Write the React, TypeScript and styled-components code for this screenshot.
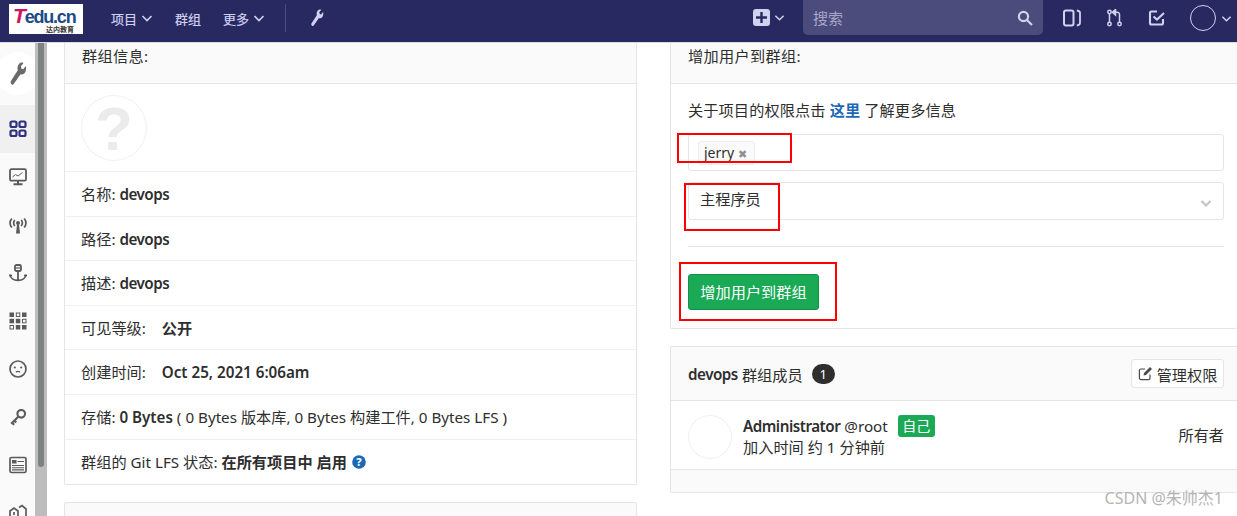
import React from 'react';
import styled, { createGlobalStyle } from 'styled-components';

const GlobalStyle = createGlobalStyle`
  html, body {
    margin: 0;
    padding: 0;
    height: 516px;
    overflow: hidden;
    background: #fff;
    font-family: "Noto Sans", "Noto Sans CJK SC", sans-serif;
    font-size: 15.2px;
    color: #2e2e2e;
  }
  * { box-sizing: border-box; }
`;

const Chevron = ({ size = 12, color = '#d1d1f0', weight = 1.6 }: { size?: number; color?: string; weight?: number }) => (
  <svg width={size} height={size} viewBox="0 0 12 12" fill="none" stroke={color} strokeWidth={weight}>
    <path d="M1.5 4l4.5 4.5L10.5 4" />
  </svg>
);

const WrenchIcon = ({ width, height, color }: { width: number; height: number; color: string }) => (
  <svg width={width} height={height} viewBox="0 0 16 16" fill={color} preserveAspectRatio="none">
    <path d="M14.900 2.600 12.600 4.900l-1.500-.4-.5-1.600L12.900.7c-1.400-.6-3.100-.3-4.200.8-1.100 1.100-1.400 2.600-.9 4L2 12.400c-.7.700-.7 1.700 0 2.300.7.600 1.600.600 2.200 0l6.100-6.600c1.300.4 2.800.1 3.800-.9 1.100-1.200 1.400-3.100.8-4.600z" />
  </svg>
);

const navIcon = '#d1d1f0';
const sideIcon = '#5a5a5a';
const sideActive = '#30307f';

const sideIcons: React.ReactNode[] = [
  <svg key="overview" width="18" height="18" viewBox="0 0 18 18" fill="none" stroke={sideActive} strokeWidth="2.200">
    <rect x="1.500" y="1.500" width="6" height="5.500" rx="1.500" />
    <rect x="10.500" y="1.500" width="6" height="5.500" rx="1.500" />
    <rect x="1.500" y="10.500" width="6" height="5.500" rx="1.500" />
    <rect x="10.500" y="10.500" width="6" height="5.500" rx="1.500" />
  </svg>,
  <svg key="monitor" width="18" height="18" viewBox="0 0 18 18" fill="none" stroke={sideIcon} strokeWidth="1.800">
    <rect x="1" y="1.200" width="16" height="11.500" rx="1.500" />
    <path d="M3.500 9l3-2.500 2.500 1.500 4.500-3.500" strokeWidth="1" />
    <path d="M9 13v2.500M4.500 16.200h9" strokeWidth="2" />
  </svg>,
  <svg key="antenna" width="18" height="18" viewBox="0 0 18 18" fill="none" stroke={sideIcon} strokeWidth="1.700">
    <circle cx="9" cy="7" r="2" fill={sideIcon} stroke="none" />
    <path d="M8 8.500h2l1 9H7z" fill={sideIcon} stroke="none" />
    <path d="M5.800 4c-1.400 1.800-1.400 4.200 0 6M12.200 4c1.400 1.800 1.400 4.200 0 6M2.800 2.500c-2.200 2.800-2.200 6.200 0 9M15.200 2.500c2.200 2.800 2.200 6.200 0 9" />
  </svg>,
  <svg key="anchor" width="18" height="18" viewBox="0 0 18 18" fill="none" stroke={sideIcon} strokeWidth="1.800">
    <rect x="6" y="1" width="6" height="6" rx="1.500" />
    <path d="M9 7v10M1.200 10.500c0 3.800 3.500 5.900 7.800 5.900s7.800-2.100 7.800-5.900" />
    <path d="M7 4h4" strokeWidth="1.200" />
    <path d="M0 11.500h3M15 11.500h3" strokeWidth="1.400" />
  </svg>,
  <svg key="grid" width="18" height="18" viewBox="0 0 18 18" fill={sideIcon}>
    <rect x="0.500" y="0.500" width="4.500" height="4.500" />
    <rect x="7.300" y="1" width="3.500" height="3.500" fill="none" stroke={sideIcon} />
    <rect x="13" y="0.500" width="4.500" height="4.500" />
    <rect x="0.500" y="6.800" width="4.500" height="4.500" />
    <rect x="6.800" y="6.800" width="4.500" height="4.500" />
    <rect x="13.500" y="7.300" width="3.500" height="3.500" fill="none" stroke={sideIcon} />
    <rect x="1" y="13.500" width="3.500" height="3.500" fill="none" stroke={sideIcon} />
    <rect x="6.800" y="13" width="4.500" height="4.500" />
    <rect x="13" y="13" width="4.500" height="4.500" />
  </svg>,
  <svg key="face" width="18" height="18" viewBox="0 0 18 18" fill="none" stroke={sideIcon} strokeWidth="1.700">
    <circle cx="9" cy="9" r="8" />
    <circle cx="5.800" cy="7.500" r="1.100" fill={sideIcon} stroke="none" />
    <circle cx="12.200" cy="7.500" r="1.100" fill={sideIcon} stroke="none" />
    <path d="M6.800 12.200c1.300-1 3.100-1 4.400 0" strokeWidth="1.300" />
  </svg>,
  <svg key="key" width="18" height="18" viewBox="0 0 18 18" fill="none" stroke={sideIcon} strokeWidth="2.100">
    <circle cx="12.200" cy="5.800" r="3.800" />
    <path d="M9.500 8.500 2.200 15.800M3 14.800l2.200 2M5.300 12.600l2 1.800" />
  </svg>,
  <svg key="news" width="18" height="18" viewBox="0 0 18 18" fill="none" stroke={sideIcon} strokeWidth="1.700">
    <rect x="1" y="1.500" width="16" height="15" rx="1.500" />
    <rect x="3" y="4" width="4.500" height="3.500" fill={sideIcon} stroke="none" />
    <path d="M8.500 5.500H15M3 9.500h12M3 11.700h12M3 13.900h12" strokeWidth="1.100" />
  </svg>,
  <svg key="house" width="18" height="18" viewBox="0 0 18 18" fill="none" stroke={sideIcon} strokeWidth="1.700">
    <path d="M1 7l4-3 4 3v10H1zM10 3.500l3-2 4 3.500v12h-5" />
    <path d="M5 8v3" />
  </svg>,
];

export default function App() {
  const rows: React.ReactNode[] = [
    <>名称: <Name>devops</Name></>,
    <>路径: <Name>devops</Name></>,
    <>描述: <Name>devops</Name></>,
    <>可见等级: <GapSpan /><b>公开</b></>,
    <>创建时间: <GapSpan /><b>Oct 25, 2021 6:06am</b></>,
    <>存储: <b>0 Bytes</b> ( 0 Bytes 版本库, 0 Bytes 构建工件, 0 Bytes LFS )</>,
    <>
      群组的 Git LFS 状态: <b>在所有项目中 启用</b>{' '}
      <HelpIcon viewBox="0 0 14 14">
        <circle cx="7" cy="7" r="6.800" fill="#1b69b6" />
        <text x="7" y="10.800" textAnchor="middle" fontSize="11" fontWeight="800" fill="#fff">?</text>
      </HelpIcon>
    </>,
  ];

  return (
    <>
      <GlobalStyle />
      <Navbar>
        <Logo>
          <LogoMark><LogoT>T</LogoT>edu.cn</LogoMark>
          <LogoSub>达内教育</LogoSub>
        </Logo>
        <NavLinks>
          <NavLink>项目 <Chevron /></NavLink>
          <NavLink>群组</NavLink>
          <NavLink>更多 <Chevron /></NavLink>
        </NavLinks>
        <NavDivider />
        <NavWrench><WrenchIcon width={14} height={18} color={navIcon} /></NavWrench>
        <NavRight>
          <PlusGroup>
            <PlusBox>
              <svg width="11" height="11" viewBox="0 0 11 11" fill="none" stroke="#292961" strokeWidth="2.400">
                <path d="M5.500 0v11M0 5.500h11" />
              </svg>
            </PlusBox>
            <Chevron size={11} />
          </PlusGroup>
          <SearchBox>
            <span>搜索</span>
            <svg width="16" height="16" viewBox="0 0 16 16" fill="none" stroke="#d1d1f0" strokeWidth="2.200">
              <circle cx="6.500" cy="6.500" r="4.600" />
              <path d="M10 10l5 5" />
            </svg>
          </SearchBox>
          <NavIcons>
            <svg width="18" height="18" viewBox="0 0 18 18" fill="none" stroke={navIcon} strokeWidth="2">
              <rect x="1" y="1.500" width="9.500" height="15" rx="2" />
              <path d="M13.800 1.500c2.400.3 3.200 1.200 3.200 2.500v10c0 1.300-.8 2.200-3.200 2.500" strokeWidth="1.800" />
            </svg>
            <svg width="15" height="18" viewBox="0 0 15 18" fill="none" stroke={navIcon} strokeWidth="1.500">
              <circle cx="2.500" cy="3" r="1.700" />
              <circle cx="2.500" cy="15" r="1.700" />
              <circle cx="12.500" cy="15" r="1.700" />
              <path d="M2.500 5v8M12.500 13V5.500c0-1.200-.8-2.200-2.200-2.200H8" />
              <path d="M8.500 .5v5.600L5.400 3.300z" fill={navIcon} />
            </svg>
            <svg width="18" height="18" viewBox="0 0 18 18" fill="none" stroke={navIcon} strokeWidth="2.100">
              <path d="M9 2.500H3.500C2.500 2.500 2 3 2 4v10c0 1 .5 1.500 1.500 1.500h10c1 0 1.500-.5 1.500-1.500v-4" />
              <path d="M5.500 7.500 9 10.500l7-6.500" />
            </svg>
          </NavIcons>
          <UserGroup>
            <Avatar />
            <Chevron size={11} />
          </UserGroup>
        </NavRight>
      </Navbar>

      <Main>
        <Sidebar>
          <SideTop>
            <SideCircle><WrenchIcon width={18} height={24} color="#6b6b6b" /></SideCircle>
          </SideTop>
          {sideIcons.map((icon, i) => (
            <SideItem key={i} $active={i === 0}>{icon}</SideItem>
          ))}
        </Sidebar>
        <ScrollTrack><ScrollThumb /></ScrollTrack>

        <Content>
          <LeftColumn>
            <Panel>
              <PanelHeader>群组信息:</PanelHeader>
              <AvatarRow>
                <GroupAvatar>?</GroupAvatar>
              </AvatarRow>
              {rows.map((row, i) => (
                <InfoRow key={i}>{row}</InfoRow>
              ))}
            </Panel>
            <StubPanel />
          </LeftColumn>

          <RightColumn>
            <Panel $open>
              <PanelHeader>增加用户到群组:</PanelHeader>
              <FormBody>
                <HelpText>关于项目的权限点击 <HelpLink>这里</HelpLink> 了解更多信息</HelpText>
                <TokenInput>
                  <Token>jerry <TokenClose>✖</TokenClose></Token>
                </TokenInput>
                <SelectBox>
                  <SelectText>主程序员</SelectText>
                  <SelectArrow><Chevron size={12} color="#c4c4c4" weight={2.2} /></SelectArrow>
                </SelectBox>
                <Rule />
                <SubmitButton>增加用户到群组</SubmitButton>
              </FormBody>
              <Annotation $left={6} $top={90} $width={115} $height={30} />
              <Annotation $left={13} $top={140} $width={96} $height={48} />
              <Annotation $left={8} $top={219} $width={158} $height={59} />
            </Panel>

            <Panel $open>
              <MembersHeader>
                <MembersTitle><Name>devops</Name> 群组成员 <CountBadge>1</CountBadge></MembersTitle>
                <ManageButton>
                  <svg width="15" height="15" viewBox="0 0 15 15" fill="none" stroke="#4a4a4a" strokeWidth="1.200">
                    <path d="M12 8.500V12c0 1-.6 1.600-1.600 1.600H3c-1 0-1.600-.6-1.600-1.600V4.600C1.400 3.600 2 3 3 3h4" />
                    <path d="M5.500 9.500l.5-2.500 6-6 2 2-6 6z" fill="#4a4a4a" stroke="none" />
                  </svg>
                  管理权限
                </ManageButton>
              </MembersHeader>
              <MemberRow>
                <MemberAvatar />
                <MemberInfo>
                  <MemberName>
                    <Name>Administrator</Name> @root <SelfBadge>自己</SelfBadge>
                  </MemberName>
                  <div>加入时间 约 1 分钟前</div>
                </MemberInfo>
                <MemberRole>所有者</MemberRole>
              </MemberRow>
              <PanelFooter />
            </Panel>
          </RightColumn>
        </Content>
      </Main>
      <Watermark>CSDN @朱帅杰1</Watermark>
    </>
  );
}

const GapSpan = styled.span`
  display: inline-block;
  width: 12px;
`;

const Name = styled.b`
  font-weight: 600;
  letter-spacing: -0.48px;
`;

const HelpIcon = styled.svg`
  width: 14px;
  height: 14px;
  vertical-align: -1px;
  margin-left: 1px;
`;

const Navbar = styled.header`
  height: 43px;
  background: #292961;
  border-bottom: 1px solid #dcdcde;
  display: flex;
  align-items: center;
  padding-left: 9px;
`;

const Logo = styled.div`
  width: 74px;
  height: 30px;
  margin-top: -4px;
  background: #fff;
  display: flex;
  flex-direction: column;
  font-family: "Liberation Sans", sans-serif;
`;

const LogoMark = styled.div`
  margin: 5px 0 0 4px;
  font-size: 18px;
  line-height: 17px;
  font-weight: 700;
  letter-spacing: -1.2px;
  color: #1c4a86;
`;

const LogoT = styled.span`
  color: #d0135e;
  font-size: 21px;
  line-height: 0;
  font-style: italic;
`;

const LogoSub = styled.div`
  align-self: flex-end;
  margin-right: 9px;
  font-family: "Noto Sans CJK SC", sans-serif;
  font-size: 7px;
  line-height: 7px;
  font-weight: 700;
  color: #333;
`;

const NavLinks = styled.nav`
  display: flex;
  gap: 22px;
  margin-left: 28px;
  margin-top: -6px;
`;

const NavLink = styled.span`
  display: inline-flex;
  align-items: center;
  gap: 4px;
  font-size: 13px;
  color: #d1d1f0;
  -webkit-text-stroke: 0.2px #d1d1f0;
`;

const NavDivider = styled.div`
  width: 1px;
  height: 28px;
  margin: -6px 0 0 20px;
  background: #4b4b7c;
`;

const NavWrench = styled.div`
  display: flex;
  margin: -6px 0 0 24px;
`;

const NavRight = styled.div`
  margin-left: auto;
  display: flex;
  align-items: flex-start;
  align-self: flex-start;
`;

const PlusGroup = styled.div`
  display: flex;
  align-items: center;
  gap: 4px;
  margin-top: 9px;
`;

const PlusBox = styled.div`
  width: 17px;
  height: 17px;
  border-radius: 3px;
  background: #d1d1f0;
  display: flex;
  align-items: center;
  justify-content: center;
`;

const SearchBox = styled.div`
  width: 240px;
  height: 35px;
  margin-left: 18px;
  padding: 0 10px;
  border-radius: 0 0 5px 5px;
  background: #4b4b7c;
  color: #a7a7cb;
  font-size: 15px;
  display: flex;
  align-items: center;
  justify-content: space-between;
`;

const NavIcons = styled.div`
  display: flex;
  gap: 26px;
  margin: 9px 0 0 20px;
`;

const UserGroup = styled.div`
  display: flex;
  align-items: center;
  gap: 5px;
  margin: 5px 5px 0 24px;
`;

const Avatar = styled.div`
  width: 26px;
  height: 26px;
  border-radius: 50%;
  border: 1px solid #d1d1f0;
`;

const Main = styled.main`
  display: flex;
  height: 473px;
  overflow: hidden;
`;

const Sidebar = styled.aside`
  width: 35px;
  flex: none;
  background: #fafafa;
  overflow: hidden;
`;

const SideTop = styled.div`
  height: 62px;
  padding-top: 9px;
`;

const SideCircle = styled.div`
  width: 43px;
  height: 43px;
  margin-left: -4px;
  border-radius: 50%;
  background: #fff;
  display: flex;
  align-items: center;
  justify-content: center;
`;

const SideItem = styled.div<{ $active?: boolean }>`
  height: 48px;
  display: flex;
  align-items: center;
  justify-content: center;
  background: ${p => (p.$active ? '#f0f0f0' : 'transparent')};
`;

const ScrollTrack = styled.div`
  width: 12px;
  flex: none;
  background: #bdbdbd;
  padding: 0 3px;
`;

const ScrollThumb = styled.div`
  width: 6px;
  height: 424px;
  border-radius: 0 0 3px 3px;
  background: #7f8283;
`;

const Content = styled.div`
  flex: 1;
  min-width: 0;
  display: flex;
  gap: 33px;
  padding-left: 17px;
`;

const LeftColumn = styled.div`
  width: 573px;
  flex: none;
  display: flex;
  flex-direction: column;
  gap: 17px;
`;

const RightColumn = styled.div`
  flex: 1;
  min-width: 0;
  display: flex;
  flex-direction: column;
  gap: 17px;
`;

const Panel = styled.section<{ $open?: boolean }>`
  position: relative;
  border: 1px solid #e5e5e5;
  border-top: none;
  border-right: ${p => (p.$open ? 'none' : '1px solid #e5e5e5')};
  border-radius: 0 0 2px 2px;
  background: #fff;
`;

const StubPanel = styled.div`
  height: 40px;
  flex: none;
  border: 1px solid #e5e5e5;
  border-radius: 2px;
  background: #fafafa;
`;

const PanelHeader = styled.div`
  height: 41px;
  padding: 0 17px 16px;
  display: flex;
  align-items: center;
  letter-spacing: 0.3px;
  background: #fafafa;
  border-bottom: 1px solid #e5e5e5;
`;

const AvatarRow = styled.div`
  height: 88px;
  padding: 11px 16px;
  border-bottom: 1px solid #f0f0f0;
`;

const GroupAvatar = styled.div`
  width: 66px;
  height: 66px;
  border: 1px solid #f0f0f0;
  border-radius: 50%;
  display: flex;
  align-items: center;
  justify-content: center;
  font-family: "Liberation Sans", sans-serif;
  font-size: 62px;
  font-weight: 700;
  color: #ebebeb;
`;

const InfoRow = styled.div`
  height: 44.6px;
  padding: 0 16px;
  display: block;
  line-height: 44px;
  white-space: pre-wrap;
  border-bottom: 1px solid #f0f0f0;
  &:last-child { border-bottom: none; }
  b { font-weight: 600; }
`;

const FormBody = styled.div`
  padding: 14px 13px 18px 17px;
`;

const HelpText = styled.div`
  height: 27px;
  line-height: 24px;
  margin-bottom: 9px;
  letter-spacing: 0.1px;
`;

const HelpLink = styled.span`
  color: #1b69b6;
  font-weight: 700;
`;

const TokenInput = styled.div`
  height: 37px;
  border: 1px solid #e5e5e5;
  border-radius: 3px;
  padding: 6px 9px;
`;

const Token = styled.span`
  display: inline-flex;
  align-items: center;
  gap: 4px;
  height: 24px;
  padding: 0 7px 2px 5px;
  border: 1px solid #ececec;
  border-radius: 3px;
  background: #fafafa;
  font-size: 14px;
`;

const TokenClose = styled.span`
  font-size: 11px;
  line-height: 11px;
  margin-top: 3px;
  color: #8f8f8f;
`;

const SelectBox = styled.div`
  height: 38px;
  margin-top: 11px;
  padding: 0 11px;
  border: 1px solid #e5e5e5;
  border-radius: 3px;
  display: flex;
  align-items: center;
  justify-content: space-between;
`;

const SelectText = styled.span`
  margin-bottom: 6px;
`;

const SelectArrow = styled.span`
  display: flex;
  margin-top: 4px;
`;

const Rule = styled.div`
  height: 1px;
  margin: 26px 0 27px;
  background: #e5e5e5;
`;

const SubmitButton = styled.button`
  display: block;
  width: 131px;
  height: 36px;
  padding: 0 0 3px;
  border: 1px solid #168f48;
  border-radius: 3px;
  background: #1aaa55;
  color: #fff;
  font: inherit;
`;

const Annotation = styled.div<{ $left: number; $top: number; $width: number; $height: number }>`
  position: absolute;
  left: ${p => p.$left}px;
  top: ${p => p.$top}px;
  width: ${p => p.$width}px;
  height: ${p => p.$height}px;
  border: 2px solid #f00;
`;

const MembersHeader = styled.div`
  height: 55px;
  padding: 0 13px 0 17px;
  display: flex;
  align-items: center;
  justify-content: space-between;
  border-top: 1px solid #e5e5e5;
  border-bottom: 1px solid #e5e5e5;
  background: #fafafa;
`;

const MembersTitle = styled.div`
  display: flex;
  align-items: center;
  gap: 4px;
`;

const CountBadge = styled.span`
  width: 23px;
  height: 20px;
  margin-left: 5px;
  border-radius: 10px;
  background: #2e2e2e;
  color: #fff;
  font-size: 13px;
  display: flex;
  align-items: center;
  justify-content: center;
`;

const ManageButton = styled.div`
  width: 93px;
  height: 29px;
  border: 1px solid #e5e5e5;
  border-radius: 3px;
  background: #fff;
  display: flex;
  align-items: center;
  justify-content: center;
  gap: 4px;
`;

const MemberRow = styled.div`
  height: 69px;
  padding: 4px 13px 0 17px;
  display: flex;
  align-items: center;
  border-bottom: 1px solid #e5e5e5;
`;

const MemberAvatar = styled.div`
  width: 44px;
  height: 44px;
  flex: none;
  border: 1px solid #f0f0f0;
  border-radius: 50%;
`;

const MemberInfo = styled.div`
  margin-left: 11px;
  line-height: 21.5px;
`;

const MemberName = styled.div`
  display: flex;
  align-items: center;
  gap: 4px;
`;

const SelfBadge = styled.span`
  height: 22px;
  width: 37px;
  margin-left: 6px;
  border-radius: 3px;
  background: #1aaa55;
  color: #fff;
  font-size: 14px;
  line-height: 22px;
  text-align: center;
`;

const MemberRole = styled.div`
  margin: -6px 0 0 auto;
`;

const PanelFooter = styled.div`
  height: 22px;
  background: #fafafa;
`;

const Watermark = styled.div`
  position: absolute;
  right: 14px;
  top: 488px;
  font-size: 16px;
  color: #b4b4b4;
  line-height: 20px;
`;
